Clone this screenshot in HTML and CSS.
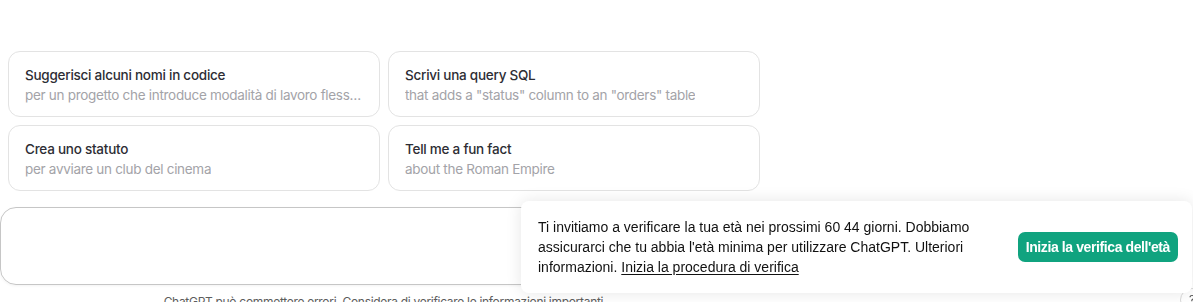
FILE: index.html
```html
<!DOCTYPE html>
<html lang="it">
<head>
    <meta charset="UTF-8">
    <meta name="viewport" content="width=device-width, initial-scale=1.0">
    <title>ChatGPT</title>
    <link rel="stylesheet" href="styles.css">
</head>
<body>
    <main class="chat">
        <div class="suggestions">
            <button class="card">
                <span class="card-title">Suggerisci alcuni nomi in codice</span>
                <span class="card-sub">per un progetto che introduce modalità di lavoro flessibili per i dipendenti</span>
            </button>
            <button class="card">
                <span class="card-title">Scrivi una query SQL</span>
                <span class="card-sub">that adds a "status" column to an "orders" table</span>
            </button>
            <button class="card">
                <span class="card-title">Crea uno statuto</span>
                <span class="card-sub">per avviare un club del cinema</span>
            </button>
            <button class="card">
                <span class="card-title">Tell me a fun fact</span>
                <span class="card-sub">about the Roman Empire</span>
            </button>
        </div>
        <div class="composer"></div>
        <p class="disclaimer">ChatGPT può commettere errori. Considera di verificare le informazioni importanti.</p>
    </main>

    <div class="help">?</div>

    <div class="toast">
        <p class="toast-text">Ti invitiamo a verificare la tua età nei prossimi 60 44 giorni. Dobbiamo assicurarci che tu abbia l'età minima per utilizzare ChatGPT. Ulteriori informazioni. <a href="#">Inizia la procedura di verifica</a></p>
        <button class="toast-btn">Inizia la verifica dell'età</button>
    </div>
</body>
</html>
```

FILE: styles.css
```css
body {
    margin: 0;
    padding: 0;
    background: #fff;
    font-family: Inter, "Liberation Sans", sans-serif;
    overflow: hidden;
}
.chat {
    width: 770px;
    padding-top: 51px;
}
.suggestions {
    display: grid;
    grid-template-columns: 372px 372px;
    gap: 8px;
    margin-left: 8px;
}
.card {
    display: flex;
    flex-direction: column;
    align-items: flex-start;
    text-align: left;
    background: #fff;
    border: 1px solid #e3e3e3;
    border-radius: 12px;
    padding: 13px 16px 11px 16px;
    font-family: inherit;
    cursor: pointer;
    min-width: 0;
}
.card-title {
    font-size: 13.5px;
    line-height: 20px;
    font-weight: 500;
    color: #2d2d34;
    letter-spacing: -0.25px;
}
.card-sub {
    font-size: 13.5px;
    line-height: 20px;
    color: #a3a3a8;
    letter-spacing: -0.3px;
    max-width: 100%;
    white-space: nowrap;
    overflow: hidden;
    text-overflow: ellipsis;
}
.composer {
    margin-top: 16px;
    height: 76px;
    border: 1px solid #c6c6c6;
    border-radius: 16px;
    box-shadow: 0 1px 3px rgba(0, 0, 0, 0.05);
}
.disclaimer {
    margin: 9px 0 0;
    text-align: center;
    font-size: 12px;
    line-height: 16px;
    letter-spacing: -0.3px;
    color: #5d5d5d;
}
.help {
    position: fixed;
    left: 1180px;
    top: 288px;
    width: 22px;
    height: 22px;
    border: 1px solid #d9d9d9;
    border-radius: 50%;
    font-size: 12px;
    color: #555;
    text-align: center;
    line-height: 22px;
}
.toast {
    position: fixed;
    left: 521px;
    top: 201px;
    width: 671px;
    height: 92px;
    box-sizing: border-box;
    display: flex;
    align-items: center;
    justify-content: space-between;
    padding: 0 14px 0 17px;
    background: #fff;
    border-radius: 8px;
    box-shadow: 0 0 16px rgba(0, 0, 0, 0.1);
}
.toast-text {
    margin: 0;
    width: 445px;
    font-family: "Liberation Sans", sans-serif;
    font-size: 14px;
    line-height: 20px;
    font-weight: 500;
    letter-spacing: 0;
    color: #111;
}
.toast-text a {
    color: #111;
    text-decoration: underline;
    text-underline-offset: 2px;
}
.toast-btn {
    background: #10a37f;
    color: #fff;
    border: none;
    border-radius: 7px;
    height: 30px;
    padding: 0 8px;
    font-family: "Liberation Sans", sans-serif;
    font-size: 14px;
    font-weight: bold;
    letter-spacing: -0.4px;
    cursor: pointer;
}
```
